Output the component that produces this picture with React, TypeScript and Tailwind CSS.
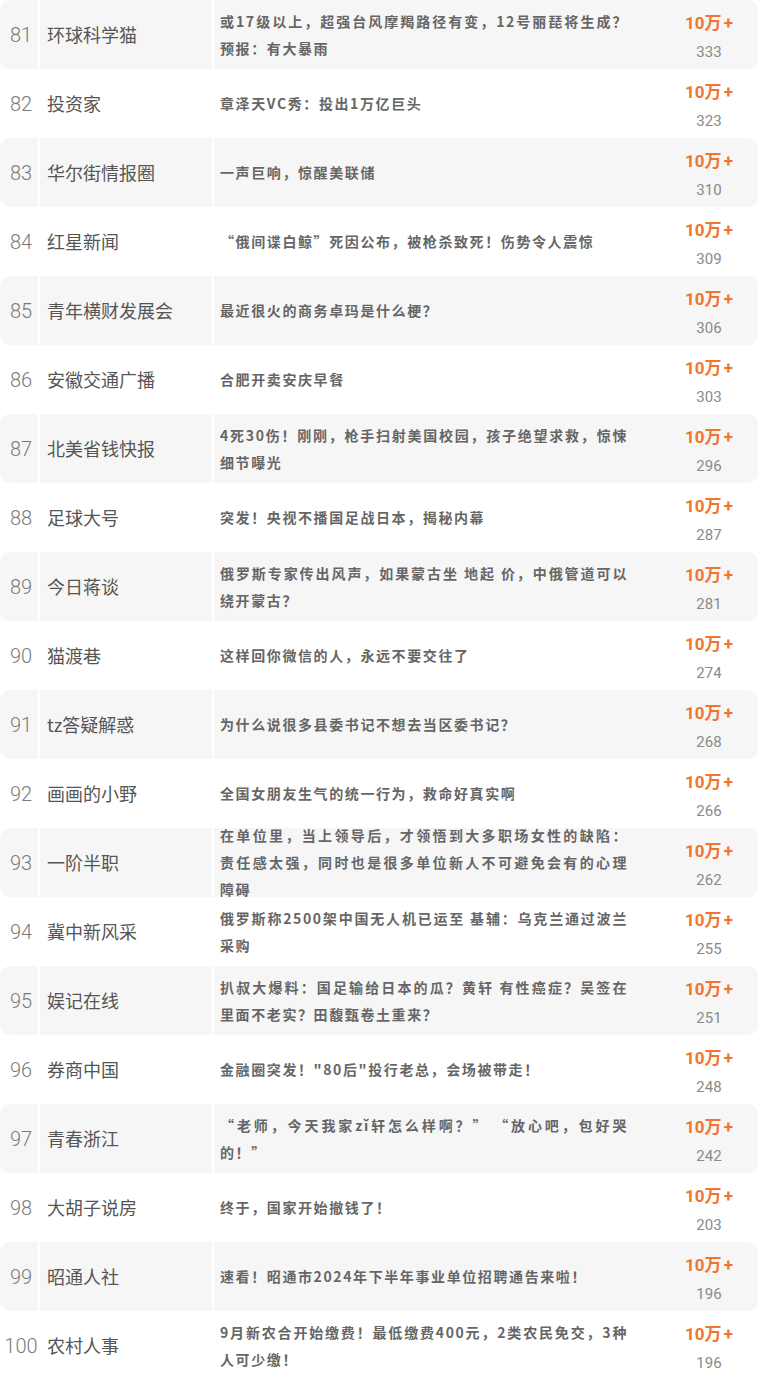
const rows: [number, string, string[], number][] = [
  [81, "环球科学猫", ["或17级以上，超强台风摩羯路径有变，12号丽琵将生成？", "预报：有大暴雨"], 333],
  [82, "投资家", ["章泽天VC秀：投出1万亿巨头"], 323],
  [83, "华尔街情报圈", ["一声巨响，惊醒美联储"], 310],
  [84, "红星新闻", ["“俄间谍白鲸”死因公布，被枪杀致死！伤势令人震惊"], 309],
  [85, "青年横财发展会", ["最近很火的商务卓玛是什么梗？"], 306],
  [86, "安徽交通广播", ["合肥开卖安庆早餐"], 303],
  [87, "北美省钱快报", ["4死30伤！刚刚，枪手扫射美国校园，孩子绝望求救，惊悚", "细节曝光"], 296],
  [88, "足球大号", ["突发！央视不播国足战日本，揭秘内幕"], 287],
  [89, "今日蒋谈", ["俄罗斯专家传出风声，如果蒙古坐 地起 价，中俄管道可以", "绕开蒙古？"], 281],
  [90, "猫渡巷", ["这样回你微信的人，永远不要交往了"], 274],
  [91, "tz答疑解惑", ["为什么说很多县委书记不想去当区委书记？"], 268],
  [92, "画画的小野", ["全国女朋友生气的统一行为，救命好真实啊"], 266],
  [93, "一阶半职", ["在单位里，当上领导后，才领悟到大多职场女性的缺陷：", "责任感太强，同时也是很多单位新人不可避免会有的心理", "障碍"], 262],
  [94, "冀中新风采", ["俄罗斯称2500架中国无人机已运至 基辅：乌克兰通过波兰", "采购"], 255],
  [95, "娱记在线", ["扒叔大爆料：国足输给日本的瓜？黄轩 有性癌症？吴签在", "里面不老实？田馥甄卷土重来？"], 251],
  [96, "券商中国", ["金融圈突发！\"80后\"投行老总，会场被带走！"], 248],
  [97, "青春浙江", ["“老师，今天我家zǐ轩怎么样啊？” “放心吧，包好哭", "的！”"], 242],
  [98, "大胡子说房", ["终于，国家开始撤钱了！"], 203],
  [99, "昭通人社", ["速看！昭通市2024年下半年事业单位招聘通告来啦！"], 196],
  [100, "农村人事", ["9月新农合开始缴费！最低缴费400元，2类农民免交，3种", "人可少缴！"], 196],
];

function Row({ rank, name, lines, count, shaded }: { rank: number; name: string; lines: string[]; count: number; shaded: boolean }) {
  return (
    <div className={`flex h-[69px] shrink-0 rounded-[10px] ${shaded ? "bg-[#f6f6f6]" : "bg-white"}`}>
      {/* rank */}
      <div className="w-[40px] shrink-0 border-r-2 border-white flex items-center justify-center pl-[4px] text-[20px] font-light text-[#7a7a7a] font-['Roboto',sans-serif]">
        {rank}
      </div>
      {/* account */}
      <div className="w-[174px] shrink-0 border-r-2 border-white flex items-center pl-[7px] text-[18px] text-[#555] font-['Noto_Sans_CJK_SC',sans-serif]">
        {name}
      </div>
      {/* title, wrapped lines are justified to the column edge */}
      <div className="flex-1 flex flex-col justify-center pl-[6px] text-[14px] leading-[27px] tracking-[1.6px] font-bold text-[#666] font-['Noto_Sans_CJK_SC',sans-serif]">
        {lines.map((line, i) =>
          i < lines.length - 1 ? (
            <div key={i} className="w-[408px] whitespace-nowrap text-justify [text-align-last:justify]">
              {line}
            </div>
          ) : (
            <div key={i} className="whitespace-nowrap">
              {line}
            </div>
          )
        )}
      </div>
      {/* reads */}
      <div className="w-[98px] shrink-0 flex flex-col items-center justify-center pt-[6px]">
        <div className="leading-[29px] text-[17px] font-bold text-[#f3742f] font-['Roboto','Noto_Sans_CJK_SC',sans-serif]">
          10万<span className="ml-[2px]">+</span>
        </div>
        <div className="leading-[29px] text-[15px] text-[#8a8a8a] font-['Roboto',sans-serif]">{count}</div>
      </div>
    </div>
  );
}

export default function App() {
  return (
    <div className="w-[758px] h-[1378px] overflow-hidden bg-white flex flex-col">
      {rows.map(([rank, name, lines, count], i) => (
        <Row key={rank} rank={rank} name={name} lines={lines} count={count} shaded={i % 2 === 0} />
      ))}
    </div>
  );
}
